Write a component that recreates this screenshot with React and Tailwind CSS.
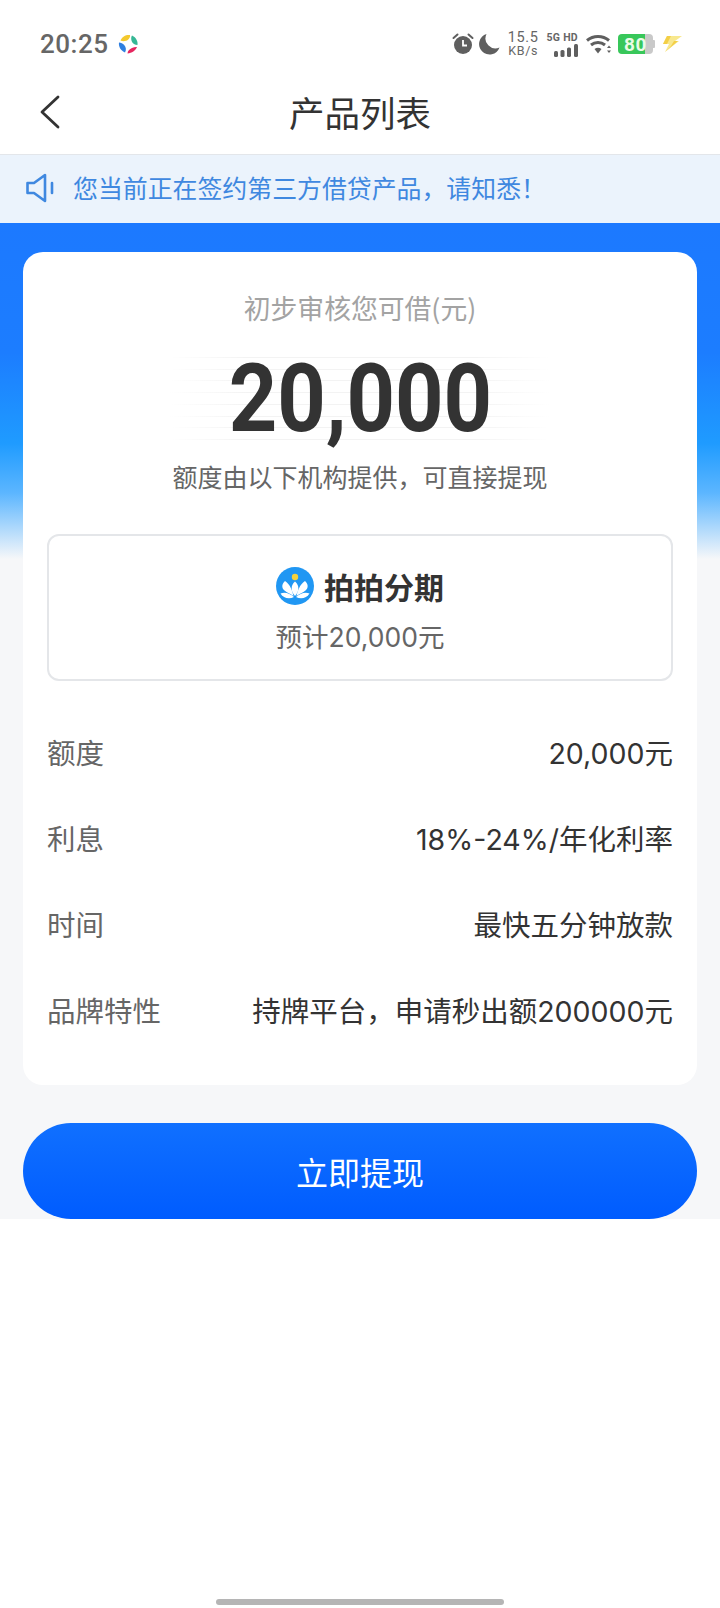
const CJK = { fontFamily: '"Noto Sans CJK SC", "Noto Sans", sans-serif' };
const MIX = { fontFamily: 'Inter, "Noto Sans CJK SC", sans-serif' };

function Alarm() {
  return (
    <svg width="22" height="22" viewBox="0 0 22 22">
      <circle cx="11" cy="12" r="9" fill="#5f5f5f" />
      <path d="M1.5 5 L5.5 1.5 M20.5 5 L16.5 1.5" stroke="#5f5f5f" strokeWidth="2" strokeLinecap="round" />
      <path d="M11 7v5.5h4" stroke="#fff" strokeWidth="1.8" fill="none" />
    </svg>
  );
}
function Moon() {
  return (
    <svg width="22" height="22" viewBox="0 0 22 22">
      <path d="M8.5 1 A10.5 10.5 0 1 0 21.5 14.5 A10 10 0 0 1 8.5 1Z" fill="#5f5f5f" />
    </svg>
  );
}
function Bars() {
  return (
    <svg width="24" height="13" viewBox="0 0 24 13">
      <rect x="0" y="7" width="4" height="6" rx="1.5" fill="#5f5f5f" />
      <rect x="6.5" y="6" width="4" height="7" rx="1.5" fill="#5f5f5f" />
      <rect x="13" y="3.5" width="4" height="9.5" rx="1.5" fill="#5f5f5f" />
      <rect x="20" y="0" width="4" height="13" rx="1.5" fill="#5f5f5f" />
    </svg>
  );
}
function Wifi() {
  return (
    <svg width="26" height="22" viewBox="0 0 26 22">
      <path d="M1 7.5 A17 17 0 0 1 23 7.5" stroke="#5f5f5f" strokeWidth="3" fill="none" />
      <path d="M5 12 A11 11 0 0 1 19 12" stroke="#5f5f5f" strokeWidth="3" fill="none" />
      <path d="M8.5 16 A6 6 0 0 1 15.5 16 L12 20.5Z" fill="#5f5f5f" />
      <path d="M23 12.5l2 2.5h-4zM23 20l2-2.5h-4z" fill="#5f5f5f" />
    </svg>
  );
}
function Bolt() {
  return (
    <svg width="20" height="18" viewBox="0 0 20 18">
      <path d="M5 1h15l-7 5h4L3 17l4-8H1z" fill="#f8e88e" />
      <path d="M5 1h4L5 9H1zM9 11l3 -5h4L3 17z" fill="#f3cf47" />
    </svg>
  );
}
function AppDot() {
  return (
    <svg width="20" height="20" viewBox="0 0 20 20">
      <path d="M2.5 6.5 C4 2.5 8 0.5 12 1 C12.5 3.5 10.5 6 8 6.8 C6 7.4 4 7.2 2.5 6.5Z" fill="#f4c92e" />
      <path d="M14 1.5 C17.5 3 20 6.5 19.5 11 C17 11 14.5 9.5 13.6 7 C13 5 13 3 14 1.5Z" fill="#36b795" />
      <path d="M19 13 C17.5 16.5 14 19 9.5 19.5 C9.5 17 11.5 15 14 14 C15.5 13.3 17.5 12.8 19 13Z" fill="#e6265f" />
      <path d="M1 8.5 C0.2 12.5 3 17 7 18.5 C8.5 16 8 13 6.2 11 C4.8 9.5 3 8.6 1 8.5Z" fill="#2f7fe0" />
    </svg>
  );
}
function Brand() {
  return (
    <svg width="38" height="38" viewBox="0 0 38 38">
      <circle cx="19" cy="19" r="19" fill="#2097f3" />
      <circle cx="19" cy="10" r="3.2" fill="#f6d23c" />
      <path d="M19 14.5 C14.5 18.5 14.5 24 19 29 C23.5 24 23.5 18.5 19 14.5Z" fill="#fff" />
      <path d="M9 14 C5.5 17 5.5 21 8.5 23.5 C11 25.5 14.5 27 17.5 29 C16.5 24.5 14.5 17.5 9 14Z" fill="#fff" />
      <path d="M29 14 C32.5 17 32.5 21 29.5 23.5 C27 25.5 23.5 27 20.5 29 C21.5 24.5 23.5 17.5 29 14Z" fill="#fff" />
      <path d="M4.5 26.5 C9 24.5 14 26.5 18 30 C13 32.5 7 31 4.5 26.5Z" fill="#fff" />
      <path d="M33.5 26.5 C29 24.5 24 26.5 20 30 C25 32.5 31 31 33.5 26.5Z" fill="#fff" />
    </svg>
  );
}
function Speaker() {
  return (
    <svg width="28" height="30" viewBox="0 0 28 30" fill="none">
      <path d="M1.5 10 H8 L19 2 V28 L8 20 H1.5Z" stroke="#3f88e0" strokeWidth="2.6" strokeLinejoin="round" />
      <path d="M26 10v10" stroke="#3f88e0" strokeWidth="2.6" strokeLinecap="round" />
    </svg>
  );
}

const rows = [
  ["额度", "20,000元"],
  ["利息", "18%-24%/年化利率"],
  ["时间", "最快五分钟放款"],
  ["品牌特性", "持牌平台，申请秒出额200000元"],
];
const lines = [0, 1, 2, 3, 4, 5, 6, 7];

export default function App() {
  return (
    <div className="flex h-[1608px] w-[720px] flex-col overflow-hidden bg-white" style={CJK}>
      <div className="flex h-[76px] items-center justify-between pl-[40px] pr-[38px] pt-[12px] text-[#666]">
        <div className="flex items-center gap-[10px]">
          <span className="text-[26px] font-medium leading-none tracking-[0.5px] [font-family:Roboto,sans-serif]">20:25</span>
          <AppDot />
        </div>
        <div className="flex items-center">
          <Alarm />
          <div className="ml-[4px]"><Moon /></div>
          <div className="ml-[8px] flex flex-col items-center text-[14.5px] leading-[13px] tracking-[0.6px] [font-family:Roboto,sans-serif]">
            <span>15.5</span>
            <span className="text-[12.5px]">KB/s</span>
          </div>
          <div className="ml-[8px] flex flex-col items-end gap-[1px]">
            <span className="text-[10.5px] font-bold leading-[11px] tracking-[0.3px] [font-family:Roboto,sans-serif]">5G HD</span>
            <Bars />
          </div>
          <div className="ml-[8px]"><Wifi /></div>
          <div className="ml-[6px] flex items-center">
            <div className="flex h-[20px] w-[35px] items-center justify-center rounded-[4px] bg-[linear-gradient(90deg,#38c75a_76%,#c9c9c9_76%)] text-[19px] font-bold leading-none tracking-[0.5px] text-[#eafbe6] [font-family:Roboto,sans-serif]">80</div>
            <div className="h-[8px] w-[2px] rounded-r-[1px] bg-[#c9c9c9]" />
          </div>
          <div className="ml-[7px]"><Bolt /></div>
        </div>
      </div>

      <div className="relative flex h-[79px] items-center justify-center border-b border-[#e3e6ea] pb-[6px]">
        <svg className="absolute left-[40px] top-[19px]" width="20" height="34" viewBox="0 0 20 34" fill="none">
          <path d="M18 2 L2 17 L18 32" stroke="#333" strokeWidth="2.8" strokeLinecap="round" strokeLinejoin="round" />
        </svg>
        <span className="text-[35.5px] leading-none text-[#333]">产品列表</span>
      </div>

      <div className="flex h-[68px] items-center gap-[19px] bg-[#ebf3fc] pb-[3px] pl-[26px]">
        <Speaker />
        <span className="text-[24.9px] leading-none text-[#3f88e0]">您当前正在签约第三方借贷产品，请知悉！</span>
      </div>

      <div className="flex h-[996px] flex-col bg-[#f6f7f9] bg-[linear-gradient(180deg,#1c79ff_0px,#1c7dff_130px,#1f9bff_220px,#5cb6ff_270px,#f6f7f9_336px)] px-[23px] pt-[29px]">
        <div className="flex h-[833px] flex-col items-center rounded-[20px] bg-white px-[24px] pt-[41px]">
          <div className="text-[26.8px] leading-[30px] text-[#a3a3a3]">初步审核您可借(元)</div>
          <div className="relative mt-[34px] flex h-[83px] w-[380px] items-center justify-center">
            <div className="absolute inset-0 flex flex-col justify-between">
              {lines.map((l) => (
                <div key={l} className="h-[1px] w-full bg-[linear-gradient(90deg,transparent,#f3f3f3_20%,#f3f3f3_80%,transparent)]" />
              ))}
            </div>
            <span className="relative scale-x-[0.9] text-[94px] font-bold leading-none text-[#333] [font-family:Roboto,sans-serif]">20,000</span>
          </div>
          <div className="mt-[21px] text-[25px] leading-[30px] text-[#666]">额度由以下机构提供，可直接提现</div>
          <div className="mt-[43px] flex h-[147px] w-full flex-col items-center justify-center rounded-[12px] border-2 border-[#e4e6e9] pt-[3px]">
            <div className="flex items-center gap-[10px]">
              <Brand />
              <span className="text-[30px] font-bold leading-none text-[#333]">拍拍分期</span>
            </div>
            <div className="mt-[17px] text-[26.5px] leading-[30px] text-[#666]" style={MIX}>预计20,000元</div>
          </div>
          <div className="mt-[30px] flex w-full flex-col" style={MIX}>
            {rows.map(([k, v]) => (
              <div key={k} className="flex h-[86px] items-center justify-between text-[28.5px]">
                <span className="text-[#666]">{k}</span>
                <span className="text-[#333]">{v}</span>
              </div>
            ))}
          </div>
        </div>
        <button className="mt-[38px] h-[96px] w-full rounded-[48px] bg-[linear-gradient(180deg,#1070ff,#005cff)] text-[32px] text-white">立即提现</button>
      </div>

      <div className="mt-auto mb-[3px] h-[6px] w-[288px] self-center rounded-full bg-[#b5b5b5]" />
    </div>
  );
}
